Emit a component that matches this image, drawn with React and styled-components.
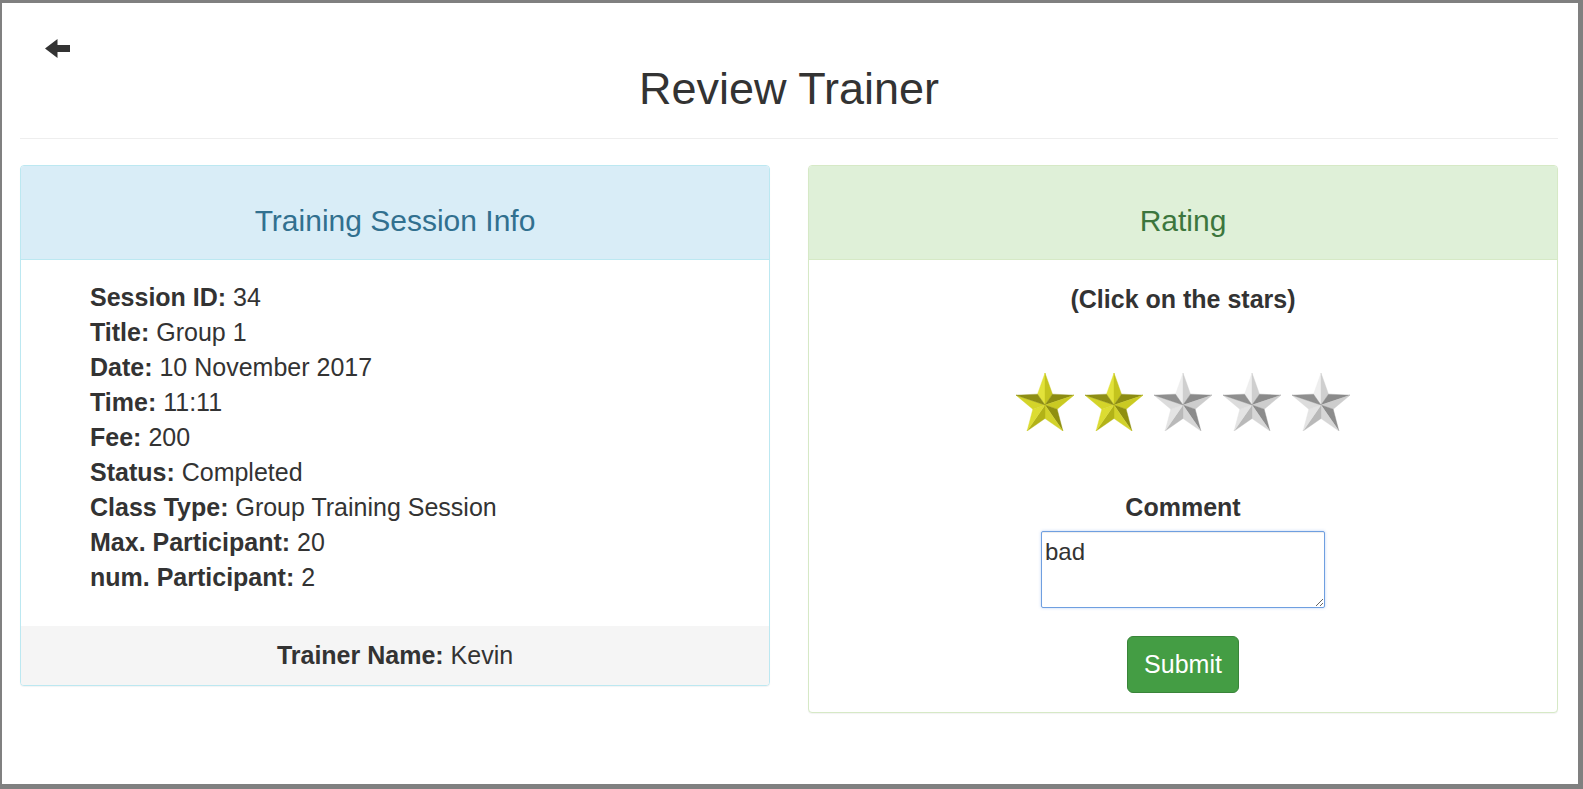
import React from 'react';
import styled, { createGlobalStyle } from 'styled-components';

const GlobalStyle = createGlobalStyle`
  body {
    margin: 0;
    font-family: "Liberation Sans", Arial, sans-serif;
    color: #333;
    background: #fff;
  }
`;

const Frame = styled.div`
  height: 789px;
  box-sizing: border-box;
  border-style: solid;
  border-color: #808080;
  border-width: 3px 5px 5px 2px;
  padding: 0 20px 0 18px;
`;

const BackLink = styled.a`
  display: block;
  width: 25px;
  height: 19px;
  margin: 36px 0 0 25px;
  color: #333;
  cursor: pointer;

  svg {
    display: block;
  }
`;

const Title = styled.h1`
  margin: 7px 0 0;
  font-size: 45px;
  font-weight: 400;
  line-height: 48px;
  text-align: center;
  color: #333;
`;

const Divider = styled.hr`
  margin: 25px 0 0;
  height: 0;
  border: 0;
  border-top: 1px solid #eee;
`;

const Columns = styled.div`
  display: grid;
  grid-template-columns: 1fr 1fr;
  gap: 38px;
  margin-top: 26px;
  align-items: start;
`;

const Panel = styled.div`
  border: 1px solid ${p => p.$border};
  border-radius: 4px;
  background: #fff;
  box-shadow: 0 1px 1px rgba(0, 0, 0, 0.05);
  overflow: hidden;
`;

const PanelHeading = styled.div`
  background: ${p => p.$bg};
  color: ${p => p.$color};
  border-bottom: 1px solid ${p => p.$border};
  padding: 38px 15px 22px;

  h3 {
    margin: 0;
    font-size: 30px;
    font-weight: 400;
    line-height: 33px;
    text-align: center;
  }
`;

const InfoBody = styled.div`
  padding: 20px 15px 31px 69px;
  font-size: 25px;
  line-height: 35px;
`;

const InfoRow = styled.div`
  white-space: nowrap;

  b {
    font-weight: 700;
  }
`;

const PanelFooter = styled.div`
  background: #f5f5f5;
  padding: 12px 15px;
  font-size: 25px;
  line-height: 35px;
  text-align: center;
`;

const RatingBody = styled.div`
  padding: 21.5px 15px 19px;
  font-size: 25px;
  line-height: 35px;
  text-align: center;
`;

const Label = styled.div`
  font-weight: 700;
  margin-top: ${p => p.$top || 0}px;
`;

const StarRow = styled.div`
  display: flex;
  justify-content: center;
  gap: 11px;
  margin-top: 56.5px;
  height: 58px;

  svg {
    display: block;
    cursor: pointer;
  }
`;

const CommentBox = styled.textarea`
  display: block;
  box-sizing: border-box;
  width: 284px;
  height: 77px;
  margin: 6.5px auto 0;
  padding: 6px 3px 0;
  font-family: "Liberation Sans", Arial, sans-serif;
  font-size: 24px;
  line-height: 28px;
  color: #333;
  border: 1px solid #6f9fe0;
  border-radius: 2px;
  outline: none;
  box-shadow: inset 0 1px 1px rgba(0, 0, 0, 0.075), 0 0 3px rgba(102, 150, 233, 0.45);
`;

const SubmitButton = styled.button`
  display: block;
  width: 112px;
  height: 57px;
  margin: 28px auto 0;
  background: #449d44;
  border: 1px solid #398439;
  border-radius: 6px;
  color: #fff;
  font-family: "Liberation Sans", Arial, sans-serif;
  font-size: 25px;
  cursor: pointer;
`;

// star geometry, mapped into a 58x58 box
const R_IN = 0.42;
const mapPt = (x, y) => [((x + 0.951) / 1.902) * 58, ((y + 1) / 1.809) * 58];
const polar = (deg, r) => {
  const a = (deg * Math.PI) / 180;
  return mapPt(r * Math.cos(a), r * Math.sin(a));
};
const CENTER = mapPt(0, 0);

const facets = [];
for (let k = 0; k < 5; k++) {
  const a = -90 + 72 * k;
  const outer = polar(a, 1);
  facets.push([CENTER, polar(a - 36, R_IN), outer]);
  facets.push([CENTER, outer, polar(a + 36, R_IN)]);
}

const palettes = {
  gold: [
    '#e2e23a', '#c4c41e',
    '#8c8c12', '#caca22',
    '#8f8f10', '#d2d22a',
    '#b2b218', '#dcdc32',
    '#d4d42a', '#8e8e14',
  ],
  gray: [
    '#eeeeee', '#cfcfcf',
    '#8a8a8a', '#cdcdcd',
    '#8c8c8c', '#d6d6d6',
    '#b9b9b9', '#e4e4e4',
    '#dcdcdc', '#8f8f8f',
  ],
};

const Star = ({ filled }) => {
  const colors = palettes[filled ? 'gold' : 'gray'];
  return (
    <svg width="58" height="58" viewBox="0 0 58 58">
      {facets.map((f, i) => (
        <polygon
          key={i}
          points={f.map(p => p.join(',')).join(' ')}
          fill={colors[i]}
          stroke={colors[i]}
          strokeWidth="0.4"
          strokeLinejoin="round"
        />
      ))}
    </svg>
  );
};

const ArrowLeft = () => (
  <svg width="25" height="19" viewBox="0 0 25 19">
    <path d="M0 9.5 L12.5 0 L12.5 6 L25 6 L25 13 L12.5 13 L12.5 19 Z" fill="currentColor" />
  </svg>
);

const sessionInfo = [
  ['Session ID', '34'],
  ['Title', 'Group 1'],
  ['Date', '10 November 2017'],
  ['Time', '11:11'],
  ['Fee', '200'],
  ['Status', 'Completed'],
  ['Class Type', 'Group Training Session'],
  ['Max. Participant', '20'],
  ['num. Participant', '2'],
];

const rating = 2;

export default function App() {
  return (
    <>
      <GlobalStyle />
      <Frame>
        <BackLink><ArrowLeft /></BackLink>
        <Title>Review Trainer</Title>
        <Divider />
        <Columns>
          <Panel $border="#bce8f1">
            <PanelHeading $bg="#d9edf7" $color="#31708f" $border="#bce8f1">
              <h3>Training Session Info</h3>
            </PanelHeading>
            <InfoBody>
              {sessionInfo.map(([label, value]) => (
                <InfoRow key={label}>
                  <b>{label}:</b> {value}
                </InfoRow>
              ))}
            </InfoBody>
            <PanelFooter>
              <b>Trainer Name:</b> Kevin
            </PanelFooter>
          </Panel>
          <Panel $border="#d6e9c6">
            <PanelHeading $bg="#dff0d8" $color="#3c763d" $border="#d6e9c6">
              <h3>Rating</h3>
            </PanelHeading>
            <RatingBody>
              <Label>(Click on the stars)</Label>
              <StarRow>
                {[1, 2, 3, 4, 5].map(n => (
                  <Star key={n} filled={n <= rating} />
                ))}
              </StarRow>
              <Label $top={58.5}>Comment</Label>
              <CommentBox defaultValue="bad" />
              <SubmitButton>Submit</SubmitButton>
            </RatingBody>
          </Panel>
        </Columns>
      </Frame>
    </>
  );
}
